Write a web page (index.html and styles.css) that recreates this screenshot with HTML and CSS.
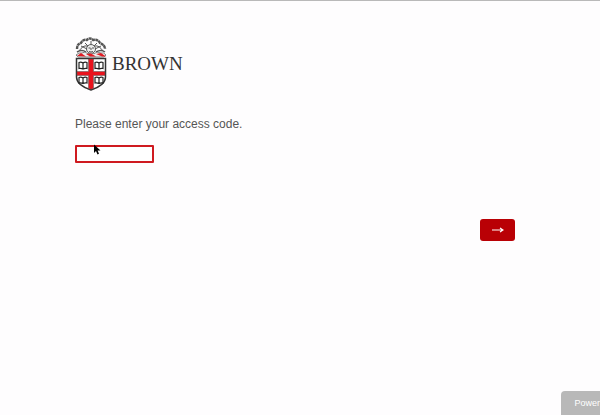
FILE: index.html
```html
<!DOCTYPE html>
<html lang="en">
<head>
<meta charset="utf-8">
<meta name="viewport" content="width=device-width, initial-scale=1">
<title>Brown</title>
<link rel="stylesheet" href="styles.css">
</head>
<body>
<main class="page">
  <header class="brand">
    <svg class="crest" viewBox="0 0 32 54" aria-hidden="true">
      <g fill="none" stroke="#555">
        <path d="M2 12Q2 7 6 6Q8 2 12 3Q15 0 18 3Q23 2 25 6Q30 8 30 12" stroke-width="2.4" stroke-dasharray="3 .4"/>
        <path d="M4 14Q8 8 12 9M28 14Q24 8 20 9M6 9l6 3M26 9l-6 3M10 6l3 3M22 6l-3 3M16 4v3" stroke-width="1"/>
        <circle cx="16" cy="12" r="4.5" fill="#eee" stroke-width="1"/>
        <path d="M13.5 11h2M17 11h2M16 11v2M14 14.5q2 1 4 0" stroke-width="1"/>
        <path d="M2 15Q7 12 11 15M21 15Q26 12 30 15" stroke-width="1.5"/>
      </g>
      <path d="M1 18Q4 15 7 16L10 15Q13 18 16 16Q19 18 22 15L26 16Q29 15 31 18L29 20H3Z" fill="#eee" stroke="#555" stroke-width=".7"/>
      <path d="M2 19l4-3 5 3.500zM11 17l5-.500 5 3h-6zM21 17l5-1 5 3.500h-4z" fill="#e01b24"/>
      <path d="M1.500 21.500h29V40Q30.500 48 16 53Q1.500 48 1.500 40Z" fill="#fff" stroke="#333" stroke-width="1.500"/>
      <path d="M13.500 22h5v12.500H30v4H18.500V51.500L16 52.300 13.500 51.500V38.500H2v-4h11.500Z" fill="#e9131d" stroke="#555" stroke-width=".500"/>
      <g fill="#fff" stroke="#222" stroke-width="1.200">
        <path d="M4 25.500q2-1 4 .500 2-1.500 4-.500v6q-2-.500-4 .500-2-1-4-.500zM8 26v6"/>
        <path d="M20 25.500q2-1 4 .500 2-1.500 4-.500v6q-2-.500-4 .500-2-1-4-.500zM24 26v6"/>
        <path d="M4 40.500q2-1 4 .500 2-1.500 4-.500v5.500q-2-.500-4 .500-2-1-4-.500zM8 41v5.500"/>
        <path d="M20 40.500q2-1 4 .500 2-1.500 4-.500v5.500q-2-.500-4 .500-2-1-4-.500zM24 41v5.500"/>
      </g>
    </svg>
    <span class="wordmark">BROWN</span>
  </header>
  <form class="access">
    <label class="question" for="code">Please enter your access code.</label>
    <input class="code" id="code" type="text">
    <button class="next" type="button" aria-label="Next">
      <svg class="arrow" viewBox="0 0 12 8" aria-hidden="true"><path d="M0 4h11M8 2 11 4 8 6" fill="none" stroke="#fff" stroke-width="1.100"/></svg>
    </button>
  </form>
</main>
<a class="powered" href="#">Power</a>
<svg class="pointer" viewBox="0 0 8 11" aria-hidden="true"><path d="M1 .500V9l2-2 1.500 3.500 1.500-.700L4.600 6.500H7.500Z" fill="#000"/></svg>
</body>
</html>
```
FILE: styles.css
```css
* {
  box-sizing: border-box;
}

body {
  margin: 0;
  min-height: 100vh;
  border-top: 1px solid #b9b9b9;
  background: #fefdfe;
  color: #555;
  font-family: "Liberation Sans", Arial, sans-serif;
  font-size: 12px;
}

.page {
  padding: 36px 85px 0 75px;
}

.brand {
  display: flex;
  align-items: center;
  gap: 5px;
}

.crest {
  width: 32px;
  height: 54px;
}

.wordmark {
  color: #333;
  font-family: "Liberation Serif", serif;
  font-size: 19px;
  line-height: 20px;
}

.access {
  display: flex;
  flex-direction: column;
  align-items: flex-start;
  padding-top: 25px;
}

.question {
  line-height: 16px;
}

.code {
  width: 79px;
  height: 18px;
  margin-top: 13px;
  padding: 0 4px;
  border: 2px solid #cf1a20;
  border-radius: 1px;
  background: #fff;
  color: #555;
  font: inherit;
  outline: none;
}

.next {
  display: flex;
  align-items: center;
  justify-content: center;
  align-self: flex-end;
  width: 35px;
  height: 22px;
  margin-top: 56px;
  padding: 0;
  border: 0;
  border-radius: 3px;
  background: #b90005;
}

.arrow {
  width: 12px;
  height: 8px;
}

.powered {
  position: fixed;
  right: 0;
  bottom: 0;
  padding-left: 13px;
  border-radius: 4px 0 0 0;
  background: #b8b8b8;
  color: #fff;
  font-size: 9px;
  line-height: 24px;
  text-decoration: none;
}

.pointer {
  position: absolute;
  top: 144px;
  left: 93px;
  width: 8px;
  height: 11px;
}
```
